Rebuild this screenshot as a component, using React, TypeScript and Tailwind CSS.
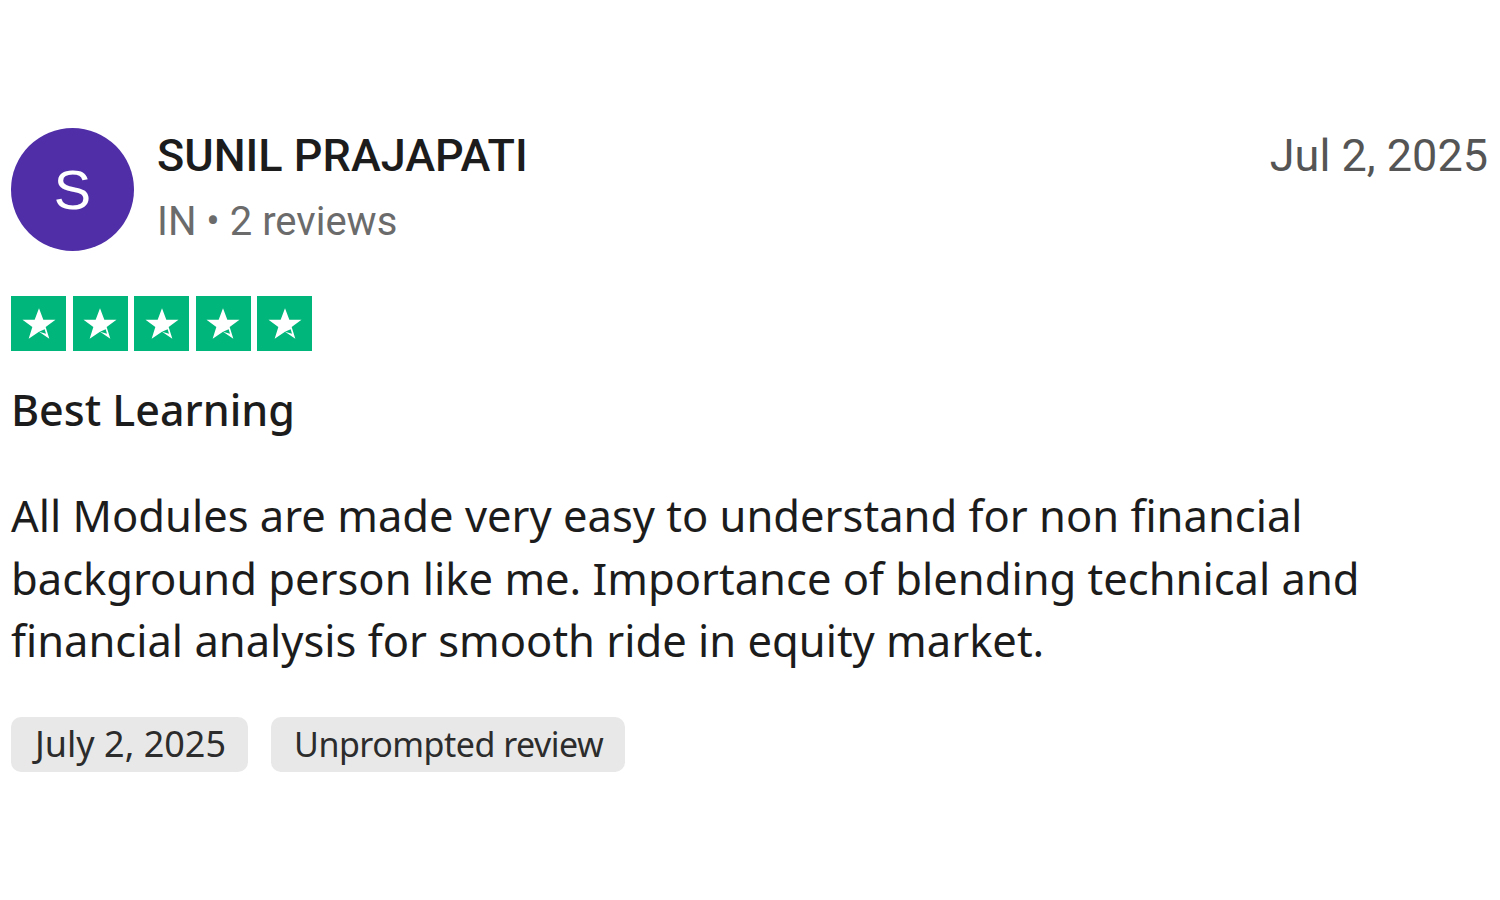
function Star() {
  return (
    <div className="w-[55px] h-[55px] bg-[#00b67a] flex items-center justify-center">
      <svg viewBox="0 0 24 24" className="w-[40px] h-[40px]">
        <path d="M12 2.5l2.6 6.9h7.3l-5.9 4.4 2.2 7.1L12 16.6l-6.2 4.3 2.2-7.1-5.9-4.4h7.3z" fill="#fff" />
        <path d="M15.4 15.1l0.8 2.7L12 16.6z" fill="#00b67a" />
      </svg>
    </div>
  );
}

export default function App() {
  return (
    <div className="min-h-[900px] bg-white px-[11px] pt-[128px] font-['Noto_Sans',sans-serif] text-[#1c1c1c]">
      {/* Header */}
      <div className="flex items-start">
        <div className="w-[123px] h-[123px] rounded-full bg-[#4f2ea8] flex items-center justify-center text-white text-[56px] font-['Liberation_Sans',sans-serif] shrink-0">
          S
        </div>
        <div className="ml-[23px] flex-1 pt-[3px]">
          <div className="font-['Roboto',sans-serif] font-medium text-[45px] leading-[50px] text-[#1c1c1c]">
            SUNIL PRAJAPATI
          </div>
          <div className="mt-[18px] font-['Roboto',sans-serif] text-[40px] leading-[46px] text-[#6b6b6b]">
            IN • 2 reviews
          </div>
        </div>
        <div className="pt-[3px] pr-[1px] font-['Roboto',sans-serif] text-[45px] leading-[50px] text-[#555555]">
          Jul 2, 2025
        </div>
      </div>

      {/* Rating */}
      <div className="mt-[45px] flex gap-[6.5px]">
        <Star />
        <Star />
        <Star />
        <Star />
        <Star />
      </div>

      <h2 className="mt-[34px] text-[43px] leading-[50px] font-medium">Best Learning</h2>

      <p className="mt-[49px] text-[43.5px] leading-[62.5px] max-w-[1460px]">
        All Modules are made very easy to understand for non financial
        <br />
        background person like me. Importance of blending technical and
        <br />
        financial analysis for smooth ride in equity market.
      </p>

      <div className="mt-[45px] flex gap-[23px]">
        <span className="h-[55px] pl-[24px] pr-[22px] rounded-[10px] bg-[#e8e8e8] flex items-center text-[36px] text-[#2c2c2c]">
          July 2, 2025
        </span>
        <span className="h-[55px] pl-[23px] pr-[22px] rounded-[10px] bg-[#e8e8e8] flex items-center text-[34px] tracking-[-0.5px] text-[#2c2c2c]">
          Unprompted review
        </span>
      </div>
    </div>
  );
}
